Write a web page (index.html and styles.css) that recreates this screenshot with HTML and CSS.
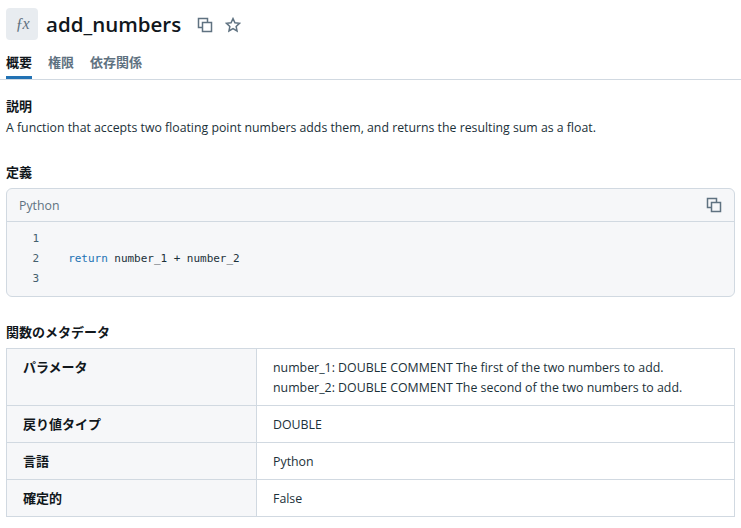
FILE: index.html
```html
<!DOCTYPE html>
<html lang="ja">
<head>
<meta charset="UTF-8">
<title>add_numbers</title>
<link rel="stylesheet" href="styles.css">
</head>
<body>
<div class="titulo">
    <div class="fx-box"><span class="fx">&fnof;x</span></div>
    <h1>add_numbers</h1>
    <svg class="ico copy-title" viewBox="0 0 16 16"><path d="M5.500 10.500h-4v-9h9v4"/><rect x="5.500" y="5.500" width="9" height="9"/></svg>
    <svg class="ico star" viewBox="0 0 16 16"><path d="M8 1.600l1.950 4.150 4.550.6-3.350 3.100.88 4.500L8 11.700l-4.030 2.250.88-4.500L1.500 6.350l4.550-.6z"/></svg>
</div>
<div class="abas">
    <div class="aba ativa">概要</div>
    <div class="aba">権限</div>
    <div class="aba">依存関係</div>
</div>
<div class="conteudo">
    <h2 class="primeiro">説明</h2>
    <p class="desc">A function that accepts two floating point numbers adds them, and returns the resulting sum as a float.</p>
    <h2 class="def">定義</h2>
    <div class="codigo">
        <div class="codigo-topo">
            <span class="lingua">Python</span>
            <svg class="ico" viewBox="0 0 16 16"><path d="M5.500 10.500h-4v-9h9v4"/><rect x="5.500" y="5.500" width="9" height="9"/></svg>
        </div>
        <div class="linhas">
            <div class="linha"><span class="num">1</span></div>
            <div class="linha"><span class="num">2</span><code>  <span class="kw">return</span> number_1 + number_2</code></div>
            <div class="linha"><span class="num">3</span></div>
        </div>
    </div>
    <h2 class="meta">関数のメタデータ</h2>
    <table>
        <tr><th>パラメータ</th><td>number_1: DOUBLE COMMENT The first of the two numbers to add.<br>number_2: DOUBLE COMMENT The second of the two numbers to add.</td></tr>
        <tr><th>戻り値タイプ</th><td>DOUBLE</td></tr>
        <tr><th>言語</th><td>Python</td></tr>
        <tr><th>確定的</th><td>False</td></tr>
    </table>
</div>
</body>
</html>
```

FILE: styles.css
```css
body { margin: 0; font-family: "Open Sans", "Noto Sans CJK JP", sans-serif; font-size: 13px; line-height: 20px; color: #1b3139; background: white; }
.titulo { display: flex; align-items: center; height: 32px; padding: 8px 6px 0; }
.fx-box { width: 32px; height: 32px; border-radius: 4px; background: #e8ecf0; display: flex; align-items: center; justify-content: center; }
.fx { font-family: "Liberation Serif", serif; font-style: italic; font-size: 16px; letter-spacing: -1px; color: #5f7281; }
h1 { margin: 0 0 0 8px; font-size: 20.5px; font-weight: 600; line-height: 32px; color: #11171c; }
.ico { width: 16px; height: 16px; fill: none; stroke: #5f7281; stroke-width: 1.5; }
.copy-title { margin-left: 16px; margin-top: 2px; }
.star { margin-left: 12px; margin-top: 2px; }
.abas { display: flex; gap: 16px; margin-top: 6px; padding: 0 6px; border-bottom: 1px solid #d1d9e1; height: 33px; }
.aba { font-size: 13px; font-weight: 700; line-height: 32px; color: #5f7281; height: 33px; box-sizing: border-box; }
.ativa { color: #11171c; border-bottom: 3px solid #2272b4; }
.conteudo { padding: 0 6px; }
h2 { margin: 0; font-size: 13px; font-weight: 700; line-height: 20px; color: #11171c; }
.primeiro { margin-top: 16px; }
.desc { margin: 2px 0 0; font-size: 12.3px; line-height: 20px; }
.def { margin-top: 24px; }
.codigo { margin-top: 6px; border: 1px solid #d1d9e1; border-radius: 6px; background: #f6f7f9; height: 107px; }
.codigo-topo { display: flex; justify-content: space-between; align-items: center; height: 32px; padding: 0 12px; border-bottom: 1px solid #d1d9e1; color: #5f7281; font-size: 12.3px; }
.lingua { padding-top: 2px; }
.linhas { padding-top: 7px; }
.linha { display: flex; height: 20px; font-family: "DejaVu Sans Mono", monospace; font-size: 11px; line-height: 20px; }
.num { width: 32px; text-align: right; color: #44606e; }
code { font-family: inherit; white-space: pre; margin-left: 16px; color: #1b3139; letter-spacing: -0.03px; }
.kw { color: #2272b4; }
.meta { margin-top: 25px; }
table { margin-top: 6px; width: 100%; border-collapse: collapse; table-layout: fixed; }
th, td { border: 1px solid #d1d9e1; padding: 8px 16px; text-align: left; vertical-align: top; }
td { font-size: 12.36px; padding: 9px 16px 7px; }
th { width: 217px; background: #f6f7f9; font-size: 13px; font-weight: 700; color: #11171c; }
```
